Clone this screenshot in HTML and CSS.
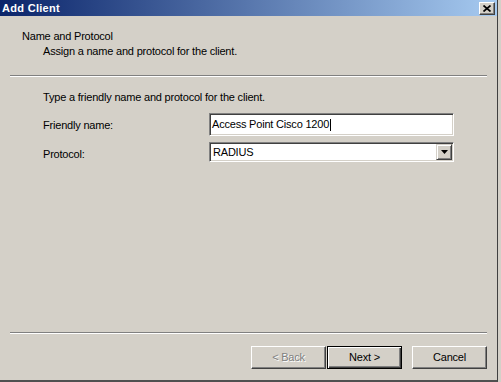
FILE: index.html
```html
<!DOCTYPE html>
<html lang="en">
<head>
    <meta charset="UTF-8">
    <title>Add Client</title>
    <link rel="stylesheet" href="styles.css">
</head>
<body>
    <div class="window">
        <div class="titlebar">
            <span class="title">Add Client</span>
            <span class="close-btn">
                <svg width="8" height="7" viewBox="0 0 8 7">
                    <path d="M0.5 0.5 L7.5 6.5 M7.5 0.5 L0.5 6.5" stroke="#000" stroke-width="1.7" fill="none"/>
                </svg>
            </span>
        </div>

        <div class="wizard-header">
            <div class="wizard-title">Name and Protocol</div>
            <div class="wizard-subtitle">Assign a name and protocol for the client.</div>
        </div>
        <div class="etched"></div>

        <div class="wizard-body">
            <div>Type a friendly name and protocol for the client.</div>
            <div class="field-row">
                <span class="field-label">Friendly name:</span>
                <div class="textbox">Access Point Cisco 1200<span class="caret"></span></div>
            </div>
            <div class="field-row field-row-combo">
                <span class="field-label field-label-low">Protocol:</span>
                <div class="combo">
                    <span>RADIUS</span>
                    <span class="drop-btn">
                        <svg width="7" height="4" viewBox="0 0 7 4">
                            <path d="M0 0 H7 L3.5 4 Z" fill="#000"/>
                        </svg>
                    </span>
                </div>
            </div>
        </div>

        <div class="wizard-footer">
            <div class="etched etched-full"></div>
            <div class="button-row">
                <button class="btn btn-back" disabled>&lt; Back</button>
                <button class="btn btn-default">Next &gt;</button>
                <button class="btn btn-cancel">Cancel</button>
            </div>
        </div>
    </div>
</body>
</html>
```

FILE: styles.css
```css
body {
    margin: 0;
    background-color: #d4d0c8;
    font-family: "Liberation Sans", Arial, sans-serif;
    font-size: 11px;
    letter-spacing: -0.2px;
    color: #000;
}

.window {
    width: 498px;
    height: 382px;
    box-sizing: border-box;
    border-right: 1px solid #404040;
    border-bottom: 2px solid #505050;
    display: flex;
    flex-direction: column;
}

.titlebar {
    height: 16px;
    flex-shrink: 0;
    display: flex;
    justify-content: space-between;
    align-items: flex-start;
    padding: 0 2px;
    background: linear-gradient(to right, #0a246a, #a6caf0);
    color: #fff;
}

.title {
    font-weight: bold;
    line-height: 16px;
    letter-spacing: 0.3px;
}

.close-btn {
    width: 16px;
    height: 13px;
    margin-top: 2px;
    box-sizing: border-box;
    display: flex;
    align-items: center;
    justify-content: center;
    background-color: #d4d0c8;
    border: 1px solid;
    border-color: #fff #404040 #404040 #fff;
    box-shadow: inset -1px -1px #808080;
}

.wizard-header {
    padding: 13px 0 16px 22px;
    line-height: 15px;
}

.wizard-subtitle {
    padding-left: 21px;
}

.etched {
    margin: 0 10px;
    border-top: 1px solid #808080;
    border-bottom: 1px solid #fff;
}

.etched-full {
    margin: 0;
}

.wizard-body {
    flex: 1;
    padding: 13px 43px 0;
    line-height: 15px;
}

.field-row {
    display: flex;
    align-items: center;
    margin-top: 8px;
}

.field-row-combo {
    margin-top: 6px;
}

.field-label {
    width: 166px;
    padding-top: 2px;
}

.field-label-low {
    padding-top: 4px;
}

.textbox,
.combo {
    width: 245px;
    box-sizing: border-box;
    display: flex;
    align-items: center;
    background-color: #fff;
    border: 1px solid;
    border-color: #808080 #fff #fff #808080;
    box-shadow: inset 1px 1px #404040, inset -1px -1px #d4d0c8;
}

.textbox {
    height: 23px;
    padding-left: 2px;
}

.caret {
    display: inline-block;
    width: 1px;
    height: 12px;
    margin-left: 1px;
    background-color: #000;
}

.combo {
    height: 20px;
    padding-left: 3px;
    justify-content: space-between;
}

.drop-btn {
    width: 16px;
    height: 16px;
    margin-right: 1px;
    box-sizing: border-box;
    display: flex;
    align-items: center;
    justify-content: center;
    background-color: #d4d0c8;
    border: 1px solid;
    border-color: #d4d0c8 #404040 #404040 #d4d0c8;
    box-shadow: inset 1px 1px #fff, inset -1px -1px #808080;
}

.wizard-footer {
    padding: 0 10px 11px;
}

.button-row {
    display: flex;
    justify-content: flex-end;
    margin-top: 12px;
}

.btn {
    width: 75px;
    height: 23px;
    box-sizing: border-box;
    padding: 0 0 1px;
    background-color: #d4d0c8;
    border: 1px solid;
    border-color: #fff #404040 #404040 #fff;
    box-shadow: inset -1px -1px #808080;
    font-family: inherit;
    font-size: 11px;
    letter-spacing: inherit;
    color: #000;
}

.btn-back {
    margin-right: 1px;
}

.btn:disabled {
    color: #808080;
    text-shadow: 1px 1px #fff;
}

.btn-default {
    border-color: #000;
    box-shadow: inset 1px 1px #fff, inset -1px -1px #404040, inset -2px -2px #808080;
}

.btn-cancel {
    margin-left: 10px;
}
```
